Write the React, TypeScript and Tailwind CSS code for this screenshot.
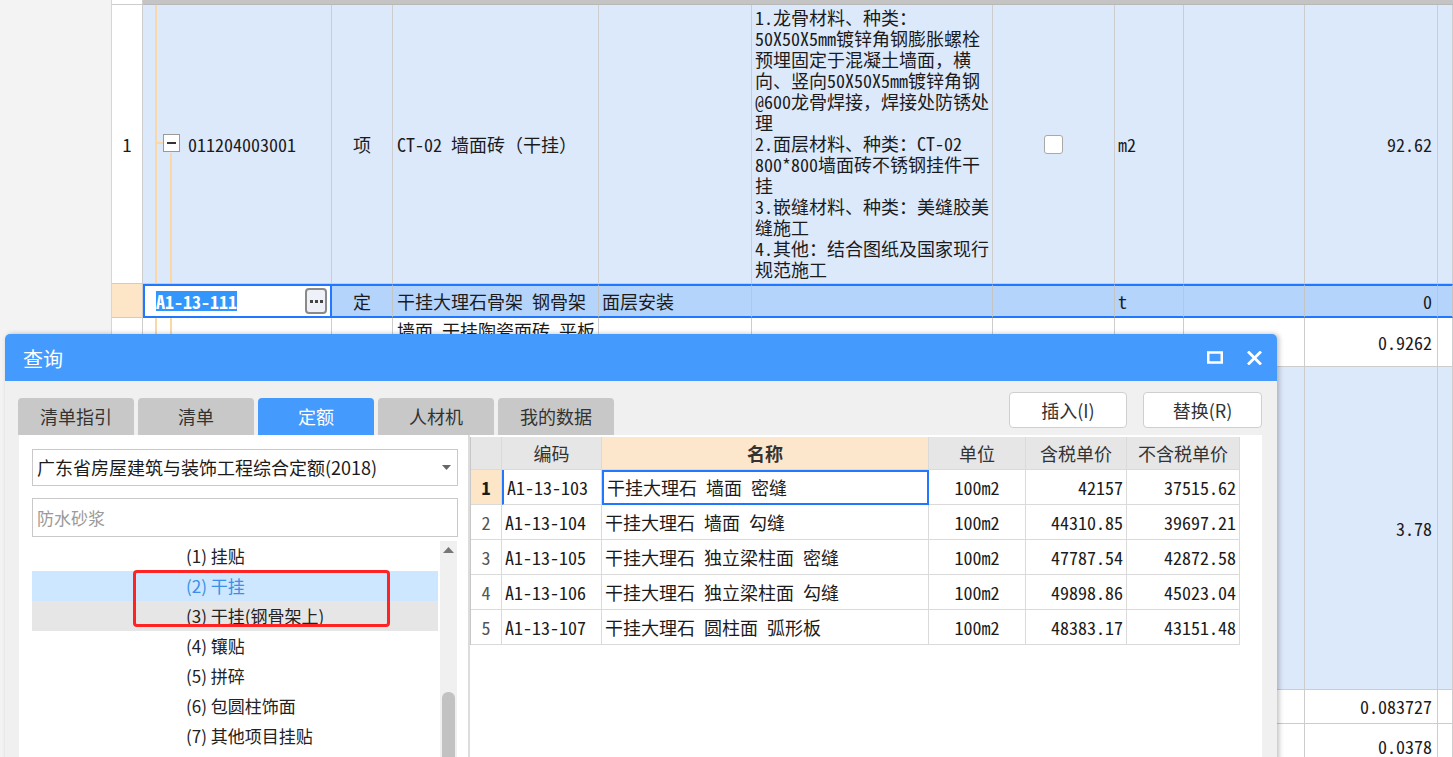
import React from "react";

const song = "font-['Noto_Sans_Mono_CJK_SC','Noto_Sans_CJK_SC',monospace]";
const hei = "font-['Noto_Sans_CJK_SC','Noto_Sans',sans-serif]";

const sheetCols =
  "grid shrink-0 grid-cols-[31px_189px_61px_206px_153px_241px_122px_69px_121px_133px_1fr]";

const descLines = [
  "1.龙骨材料、种类：",
  "50X50X5mm镀锌角钢膨胀螺栓",
  "预埋固定于混凝土墙面，横",
  "向、竖向50X50X5mm镀锌角钢",
  "@600龙骨焊接，焊接处防锈处",
  "理",
  "2.面层材料、种类：CT-02",
  "800*800墙面砖不锈钢挂件干",
  "挂",
  "3.嵌缝材料、种类：美缝胶美",
  "缝施工",
  "4.其他：结合图纸及国家现行",
  "规范施工",
];

const treeItems = [
  "(1) 挂贴",
  "(2) 干挂",
  "(3) 干挂(钢骨架上)",
  "(4) 镶贴",
  "(5) 拼碎",
  "(6) 包圆柱饰面",
  "(7) 其他项目挂贴",
];

const quotaRows = [
  { code: "A1-13-103", name: "干挂大理石 墙面 密缝", price: "42157", net: "37515.62" },
  { code: "A1-13-104", name: "干挂大理石 墙面 勾缝", price: "44310.85", net: "39697.21" },
  { code: "A1-13-105", name: "干挂大理石 独立梁柱面 密缝", price: "47787.54", net: "42872.58" },
  { code: "A1-13-106", name: "干挂大理石 独立梁柱面 勾缝", price: "49898.86", net: "45023.04" },
  { code: "A1-13-107", name: "干挂大理石 圆柱面 弧形板", price: "48383.17", net: "43151.48" },
];

const tabs = ["清单指引", "清单", "定额", "人材机", "我的数据"];

function C({ className = "", children }: { className?: string; children?: React.ReactNode }) {
  return <div className={`border-r border-b border-[#cdcdcd] ${className}`}>{children}</div>;
}

function TreeLines({ withBox }: { withBox?: boolean }) {
  return (
    <>
      <div className="absolute left-[12px] top-0 bottom-0 w-[2px] bg-[#fcd7a6]" />
      {withBox ? (
        <>
          <div className="absolute left-[13px] top-[137px] w-[8px] h-[2px] bg-[#fcd7a6]" />
          <div className="absolute left-[27px] top-[148px] bottom-0 w-[2px] bg-[#fcd7a6]" />
          <div className="absolute left-[20px] top-[129px] w-[17px] h-[18px] border border-[#9a9a9a] bg-white flex items-center justify-center">
            <div className="w-[9px] h-[2px] bg-[#333]" />
          </div>
        </>
      ) : (
        <div className="absolute left-[27px] top-0 bottom-0 w-[2px] bg-[#fcd7a6]" />
      )}
    </>
  );
}

function Sheet() {
  const blue = "bg-[#dce9fb]";
  const sel = "bg-[#b4d4fc] border-t-2 border-b-2 border-t-[#1f78ff] border-b-[#1f78ff] border-r border-r-[#c4c4c4]";
  return (
    <div className={`flex h-full text-[18px] text-[#1b1b1b] ${song}`}>
      <div className="w-[112px] shrink-0 bg-[#f3f3f3] border-r border-[#d6d6d6]" />
      <div className="flex-1 flex flex-col">
        <div className={`${sheetCols} h-[5px]`}>
          <div className="bg-white border-r border-b border-[#cdcdcd]" />
          <div className="col-span-10 bg-[#c4c4c4] border-b border-[#b8b8b8]" />
        </div>

        <div className={`${sheetCols} h-[279px]`}>
          <C className="bg-white flex items-center justify-center">1</C>
          <C className={`${blue} relative flex items-center pl-[45px]`}>
            <TreeLines withBox />
            <span className="relative">011204003001</span>
          </C>
          <C className={`${blue} flex items-center justify-center`}>项</C>
          <C className={`${blue} flex items-center pl-[4px] whitespace-nowrap`}>CT-02 墙面砖（干挂）</C>
          <C className={blue} />
          <C className={`${blue} pl-[3px] pt-[2px] leading-[21px]`}>
            {descLines.map((l) => (
              <div key={l} className="whitespace-nowrap h-[21px]">
                {l}
              </div>
            ))}
          </C>
          <C className={`${blue} flex items-center justify-center`}>
            <div className="w-[19px] h-[19px] rounded-[3px] border border-[#a9a9a9] bg-white" />
          </C>
          <C className={`${blue} flex items-center pl-[3px]`}>m2</C>
          <C className={blue} />
          <C className={`${blue} flex items-center justify-end pr-[5px]`}>92.62</C>
          <C className={blue} />
        </div>

        <div className={`${sheetCols} h-[34px]`}>
          <C className="bg-[#fde6c8]" />
          <div className="bg-white border-2 border-[#1f78ff] flex items-center justify-between pl-[11px] pr-[3px]">
            <span className="bg-[#3296fd] text-white leading-[20px] font-semibold">A1-13-111</span>
            <div className="w-[22px] h-[26px] rounded-[4px] border-2 border-[#8a8a8a] bg-[#eef1f8] flex items-center justify-center gap-[2px]">
              <div className="w-[3px] h-[3px] bg-[#444]" />
              <div className="w-[3px] h-[3px] bg-[#444]" />
              <div className="w-[3px] h-[3px] bg-[#444]" />
            </div>
          </div>
          <div className={`${sel} flex items-center justify-center`}>定</div>
          <div className={`${sel} flex items-center pl-[4px] whitespace-nowrap`}>干挂大理石骨架 钢骨架</div>
          <div className={`${sel} flex items-center pl-[3px]`}>面层安装</div>
          <div className={sel} />
          <div className={sel} />
          <div className={`${sel} flex items-center pl-[3px]`}>t</div>
          <div className={sel} />
          <div className={`${sel} flex items-center justify-end pr-[5px]`}>0</div>
          <div className={sel} />
        </div>

        <div className={`${sheetCols} h-[49px]`}>
          <C className="bg-white" />
          <C className="bg-white relative">
            <TreeLines />
          </C>
          <C className="bg-white" />
          <C className="bg-white pl-[4px] pt-[2px] leading-[21px]">墙面 干挂陶瓷面砖 平板 密缝</C>
          <C className="bg-white" />
          <C className="bg-white" />
          <C className="bg-white" />
          <C className="bg-white" />
          <C className="bg-white" />
          <C className="bg-white flex items-center justify-end pr-[5px]">0.9262</C>
          <C className="bg-white" />
        </div>

        <div className={`${sheetCols} h-[323px]`}>
          <C className="bg-white" />
          <C className={`${blue} relative`}>
            <TreeLines />
          </C>
          <C className={blue} />
          <C className={blue} />
          <C className={blue} />
          <C className={blue} />
          <C className={blue} />
          <C className={blue} />
          <C className={blue} />
          <C className={`${blue} flex items-center justify-end pr-[5px]`}>3.78</C>
          <C className={blue} />
        </div>

        <div className={`${sheetCols} h-[34px]`}>
          {Array.from({ length: 9 }).map((_, i) => (
            <C key={i} className="bg-white" />
          ))}
          <C className="bg-white flex items-center justify-end pr-[5px]">0.083727</C>
          <C className="bg-white" />
        </div>

        <div className={`${sheetCols} h-[46px]`}>
          {Array.from({ length: 9 }).map((_, i) => (
            <C key={i} className="bg-white" />
          ))}
          <C className="bg-white flex items-center justify-end pr-[5px]">0.0378</C>
          <C className="bg-white" />
        </div>
      </div>
    </div>
  );
}

function QuotaGrid() {
  const cols = "grid grid-cols-[31px_100px_327px_97px_101px_113px]";
  const cell = "border-r border-b border-[#dadada]";
  return (
    <div className={`w-[769px] border-l border-[#c8c8c8] text-[18px] text-[#1b1b1b] ${song}`}>
      <div className={`${cols} h-[33px] bg-[#e6e6e6] text-[#333]`}>
        <div className={cell} />
        <div className={`${cell} flex items-center justify-center`}>编码</div>
        <div className={`${cell} flex items-center justify-center bg-[#fde7cc] font-bold`}>名称</div>
        <div className={`${cell} flex items-center justify-center`}>单位</div>
        <div className={`${cell} flex items-center justify-center`}>含税单价</div>
        <div className={`${cell} flex items-center justify-center`}>不含税单价</div>
      </div>
      {quotaRows.map((r, i) => (
        <div key={r.code} className={`${cols} h-[35px]`}>
          <div
            className={`${cell} flex items-center justify-center ${
              i === 0 ? "bg-[#fde6c8] font-bold" : "bg-white text-[#555]"
            }`}
          >
            {i + 1}
          </div>
          <div
            className={`${cell} flex items-center pl-[3px] whitespace-nowrap ${
              i === 0 ? "border-l-2 border-l-[#1f78ff]" : ""
            }`}
          >
            {r.code}
          </div>
          <div
            className={`flex items-center pl-[3px] whitespace-nowrap ${
              i === 0 ? "border-2 border-[#1f78ff]" : cell
            }`}
          >
            {r.name}
          </div>
          <div className={`${cell} flex items-center justify-center`}>100m2</div>
          <div className={`${cell} flex items-center justify-end pr-[3px]`}>{r.price}</div>
          <div className={`${cell} flex items-center justify-end pr-[3px]`}>{r.net}</div>
        </div>
      ))}
    </div>
  );
}

function Dialog() {
  return (
    <div
      className={`absolute left-[5px] top-[334px] w-[1272px] h-[440px] rounded-t-[5px] overflow-hidden bg-[#f0f0f0] shadow-[2px_0_5px_rgba(0,0,0,0.25)] ${hei}`}
    >
      <div className="h-[47px] bg-[#459bfd] flex items-center justify-between pl-[18px] pr-[15px]">
        <span className="text-white text-[20px] pt-[3px]">查询</span>
        <div className="flex items-center gap-[24px]">
          <svg width="16" height="13" viewBox="0 0 16 13">
            <rect x="1.25" y="1.5" width="13.5" height="10" fill="none" stroke="white" strokeWidth="2.5" />
          </svg>
          <svg width="15" height="14" viewBox="0 0 15 14">
            <path d="M2 1.5 L13 12.5 M13 1.5 L2 12.5" stroke="white" strokeWidth="2.8" strokeLinecap="square" />
          </svg>
        </div>
      </div>

      <div className="flex justify-between pl-[13px] pr-[15px]">
        <div className="flex gap-[4px] pt-[17px]">
          {tabs.map((t) => (
            <div
              key={t}
              className={`w-[116px] h-[37px] rounded-t-[4px] flex items-center justify-center text-[18px] ${
                t === "定额" ? "bg-[#459bfd] text-white" : "bg-[#c8c8c8] text-[#333]"
              }`}
            >
              {t}
            </div>
          ))}
        </div>
        <div className="flex gap-[16px] pt-[11px]">
          <div className="w-[118px] h-[36px] rounded-[4px] border border-[#cfcfcf] bg-white flex items-center justify-center text-[18px] text-[#333]">
            插入(I)
          </div>
          <div className="w-[119px] h-[36px] rounded-[4px] border border-[#cfcfcf] bg-white flex items-center justify-center text-[18px] text-[#333]">
            替换(R)
          </div>
        </div>
      </div>

      <div className="flex pl-[14px] h-[330px]">
        <div className="w-[449px] bg-white pl-[13px] pr-[10px] pt-[14px]">
          <div className="h-[37px] border border-[#c9c9c9] flex items-center justify-between pl-[4px] pr-[6px] text-[18px] text-[#1b1b1b]">
            <span className="whitespace-nowrap">广东省房屋建筑与装饰工程综合定额(2018)</span>
            <svg width="9" height="5" viewBox="0 0 9 5">
              <path d="M0 0 H9 L4.5 5 Z" fill="#666" />
            </svg>
          </div>
          <div className="mt-[12px] h-[39px] border border-[#c9c9c9] flex items-center pl-[4px] text-[17px] text-[#9a9a9a]">
            防水砂浆
          </div>
          <div className="mt-[4px] flex gap-[2px]">
            <div className="relative w-[406px]">
              {treeItems.map((t, i) => (
                <div
                  key={t}
                  className={`h-[30px] flex items-center pl-[154px] text-[17px] whitespace-nowrap ${
                    i === 1 ? "bg-[#cce7ff] text-[#3a8fe8]" : i === 2 ? "bg-[#e6e6e6] text-[#222]" : "text-[#222]"
                  }`}
                >
                  {t}
                </div>
              ))}
              <div className="absolute left-[101px] top-[29px] w-[257px] h-[57px] rounded-[4px] border-[3px] border-[#ff2323]" />
            </div>
            <div className="w-[17px] h-[230px] bg-[#f0f0f0] flex flex-col items-center">
              <svg className="mt-[6px]" width="11" height="6" viewBox="0 0 11 6">
                <path d="M0 6 L5.5 0 L11 6 Z" fill="#777" />
              </svg>
              <div className="mt-[139px] w-[13px] flex-1 rounded-[6px] bg-[#c2c2c2]" />
            </div>
          </div>
        </div>
        <div className="w-[2px] bg-[#dcdcdc]" />
        <div className="w-[792px] bg-white pt-[2px]">
          <QuotaGrid />
        </div>
      </div>
    </div>
  );
}

export default function App() {
  return (
    <div className="relative w-[1453px] h-[757px] overflow-hidden bg-white">
      <Sheet />
      <Dialog />
    </div>
  );
}
